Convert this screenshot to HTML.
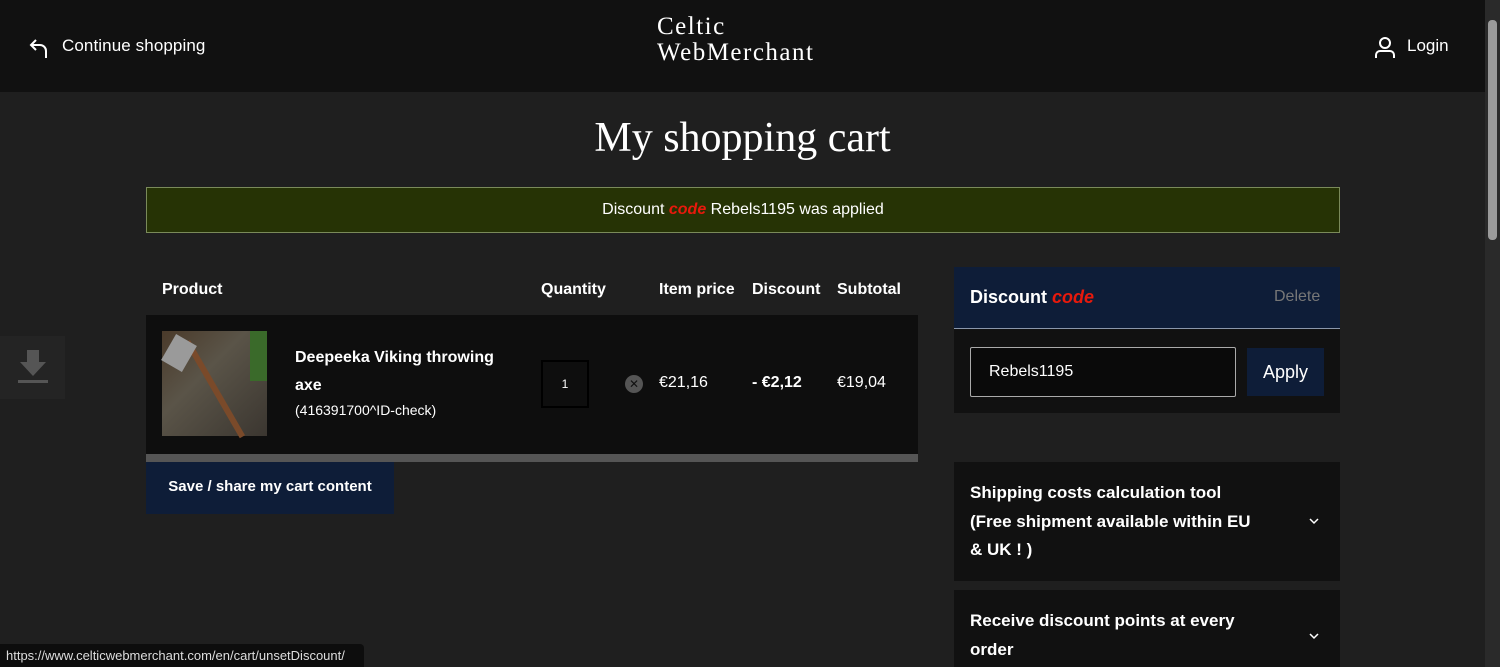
<!DOCTYPE html>
<html><head><meta charset="utf-8"><style>
*{box-sizing:border-box;margin:0;padding:0}
body{width:1500px;height:667px;overflow:hidden;background:#1f1f1f;font-family:"Liberation Sans",sans-serif;color:#fff;position:relative}
.a{position:absolute}
.b{font-weight:bold}
.c{color:#e8190c;font-style:italic;font-weight:bold}
</style></head><body>
<div class="a" style="left:0;top:0;width:1485px;height:92px;background:#111"></div>
<svg class="a" style="left:29px;top:37px" width="22" height="22" viewBox="0 0 22 22" fill="none" stroke="#fff" stroke-width="2"><path d="M7 3L2 8l5 5M2 8h9a6 6 0 0 1 6 6v7"/></svg>
<div class="a" style="left:62px;top:36px;font-size:17px;letter-spacing:0.1px">Continue shopping</div>
<div class="a" style="left:657px;top:14px;font-family:'Liberation Serif',serif;font-size:25px;line-height:26px;letter-spacing:1.5px">Celtic<br>WebMerchant</div>
<svg class="a" style="left:1374px;top:36px" width="22" height="24" viewBox="0 0 22 24" fill="none" stroke="#fff" stroke-width="2"><circle cx="11" cy="7" r="5"/><path d="M2 22v-3a4 4 0 0 1 4-4h10a4 4 0 0 1 4 4v3"/></svg>
<div class="a" style="left:1407px;top:36px;font-size:17px">Login</div>
<div class="a" style="left:1485px;top:0;width:15px;height:667px;background:#2a2a2a"></div>
<div class="a" style="left:1488px;top:20px;width:9px;height:220px;background:#9a9a9a;border-radius:4px"></div>
<div class="a" style="left:0;top:114px;width:1485px;text-align:center;font-family:'Liberation Serif',serif;font-size:42px">My shopping cart</div>
<div class="a" style="left:146px;top:187px;width:1194px;height:46px;background:#263305;border:1px solid #7a8a5a;text-align:center;font-size:16px;line-height:44px">Discount <span class="c">code</span> Rebels1195 was applied</div>
<div class="a b" style="left:162px;top:281px;font-size:16px">Product</div>
<div class="a b" style="left:541px;top:281px;font-size:16px">Quantity</div>
<div class="a b" style="left:659px;top:281px;font-size:16px">Item price</div>
<div class="a b" style="left:752px;top:281px;font-size:16px">Discount</div>
<div class="a b" style="left:837px;top:281px;font-size:16px">Subtotal</div>
<div class="a" style="left:146px;top:315px;width:772px;height:139px;background:#0e0e0e"></div>
<div class="a" style="left:146px;top:454px;width:772px;height:8px;background:#555"></div>
<div class="a" style="left:162px;top:331px;width:105px;height:105px;background:linear-gradient(135deg,#4a3a2a,#5a5448 40%,#3b3630)"></div>
<div class="a" style="width:110px;height:6px;background:#7a4a2a;transform:rotate(60deg);transform-origin:0 0;left:190px;top:340px"></div>
<div class="a" style="left:167px;top:338px;width:24px;height:30px;background:#9a9a9a;transform:rotate(30deg)"></div>
<div class="a" style="left:250px;top:331px;width:17px;height:50px;background:#3a6a2a"></div>
<div class="a b" style="left:295px;top:344px;font-size:16px;line-height:28px">Deepeeka Viking throwing<br>axe</div>
<div class="a" style="left:295px;top:402px;font-size:14px">(416391700^ID-check)</div>
<div class="a" style="left:541px;top:360px;width:48px;height:48px;border:2px solid #000;background:#0e0e0e;text-align:center;line-height:44px;font-size:12px">1</div>
<div class="a" style="left:625px;top:375px;width:18px;height:18px;border-radius:50%;background:#555;color:#111;font-size:12px;text-align:center;line-height:18px">✕</div>
<div class="a" style="left:659px;top:374px;font-size:16px">€21,16</div>
<div class="a b" style="left:752px;top:374px;font-size:16px">- €2,12</div>
<div class="a" style="left:837px;top:374px;font-size:16px">€19,04</div>
<div class="a b" style="left:146px;top:462px;width:248px;height:52px;background:#0e1d38;text-align:center;line-height:50px;font-size:15px">Save / share my cart content</div>
<div class="a" style="left:0;top:336px;width:65px;height:63px;background:#242424"></div>
<svg class="a" style="left:17px;top:350px" width="32" height="36" viewBox="0 0 32 36" fill="#555"><path d="M10 0h12v12h7L16 26 3 12h7z"/><rect x="1" y="30" width="30" height="3"/></svg>
<div class="a" style="left:954px;top:267px;width:386px;height:62px;background:#0e1d38;border-bottom:1px solid #8a96aa"></div>
<div class="a b" style="left:970px;top:287px;font-size:18px">Discount <span class="c">code</span></div>
<div class="a" style="left:1274px;top:288px;font-size:16px;color:#777">Delete</div>
<div class="a" style="left:954px;top:329px;width:386px;height:84px;background:#111"></div>
<div class="a" style="left:970px;top:347px;width:266px;height:50px;background:#0a0a0a;border:1px solid #aaa;border-radius:2px;padding-left:18px;line-height:48px;font-size:16px">Rebels1195</div>
<div class="a" style="left:1247px;top:348px;width:77px;height:48px;background:#0e1d38;text-align:center;line-height:48px;font-size:18px">Apply</div>
<div class="a" style="left:954px;top:462px;width:386px;height:119px;background:#111"></div>
<div class="a b" style="left:970px;top:479px;font-size:17px;line-height:28.5px">Shipping costs calculation tool<br>(Free shipment available within EU<br>&amp; UK ! )</div>
<svg class="a" style="left:1308px;top:517px" width="12" height="8" viewBox="0 0 12 8" fill="none" stroke="#fff" stroke-width="1.5"><path d="M2 2l4 4 4-4"/></svg>
<div class="a" style="left:954px;top:590px;width:386px;height:77px;background:#111"></div>
<div class="a b" style="left:970px;top:607px;font-size:17px;line-height:28.5px">Receive discount points at every<br>order</div>
<svg class="a" style="left:1308px;top:632px" width="12" height="8" viewBox="0 0 12 8" fill="none" stroke="#fff" stroke-width="1.5"><path d="M2 2l4 4 4-4"/></svg>
<div class="a" style="left:0;top:644px;width:364px;height:23px;background:#0d0d0d;border-radius:0 4px 0 0;font-size:13px;line-height:23px;padding-left:6px;color:#ddd">https://www.celticwebmerchant.com/en/cart/unsetDiscount/</div>
</body></html>
